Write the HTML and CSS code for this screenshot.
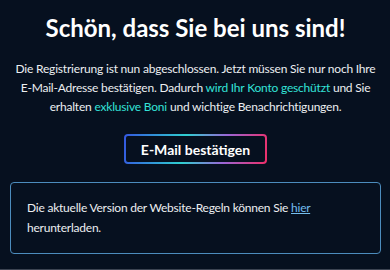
FILE: index.html
```html
<!DOCTYPE html>
<html lang="de">
<head>
<meta charset="utf-8">
<link rel="stylesheet" href="styles.css">
</head>
<body>
<main class="page">
  <h1 class="title">Schön, dass Sie bei uns sind!</h1>
  <p class="intro">Die Registrierung ist nun abgeschlossen. Jetzt müssen Sie nur noch Ihre E-Mail-Adresse bestätigen. Dadurch <span class="accent">wird Ihr Konto geschützt</span> und Sie erhalten <span class="accent">exklusive Boni</span> und wichtige Benachrichtigungen.</p>
  <button class="confirm">E-Mail bestätigen</button>
  <div class="notice">
    <p>Die aktuelle Version der Website-Regeln können Sie <a href="#" class="link">hier</a> herunterladen.</p>
  </div>
  <div class="footer-strip"></div>
</main>
</body>
</html>
```

FILE: styles.css
```css
html, body {
  margin: 0;
  padding: 0;
  background: #06101f;
  height: 100%;
  overflow: hidden;
}
.page {
  font-family: "Lato", "Open Sans", sans-serif;
  color: #eceef1;
  display: flex;
  flex-direction: column;
  align-items: center;
  padding: 12px 9px 0 10px;
}
.title {
  margin: 0;
  font-size: 24px;
  line-height: 32px;
  font-weight: bold;
  color: #ffffff;
}
.intro {
  margin: 15px 0 0;
  font-size: 12px;
  letter-spacing: -0.2px;
  line-height: 19px;
  text-align: center;
}
.accent {
  color: #33e2d8;
}
.confirm {
  margin-top: 18px;
  width: 143px;
  height: 30px;
  border: 2px solid transparent;
  border-radius: 4px;
  background:
    linear-gradient(#06101f, #06101f) padding-box,
    linear-gradient(100deg, #3457e0 0%, #2fcfd0 42%, #9a66d6 70%, #ee2e68 100%) border-box;
  color: #ffffff;
  font-family: inherit;
  font-size: 14px;
  font-weight: bold;
  padding: 0;
}
.notice {
  align-self: stretch;
  margin-top: 18px;
  border: 1px solid #4c8cbd;
  border-radius: 4px;
  padding: 15px 16px 15px;
  text-align: left;
}
.notice p {
  margin: 0;
  font-size: 12px;
  letter-spacing: -0.22px;
  line-height: 20px;
}
.link {
  color: #74bdee;
  text-decoration: underline;
}
.footer-strip {
  align-self: stretch;
  margin: 15px -9px 0 -10px;
  height: 4px;
  background: #3c4452;
}
```
